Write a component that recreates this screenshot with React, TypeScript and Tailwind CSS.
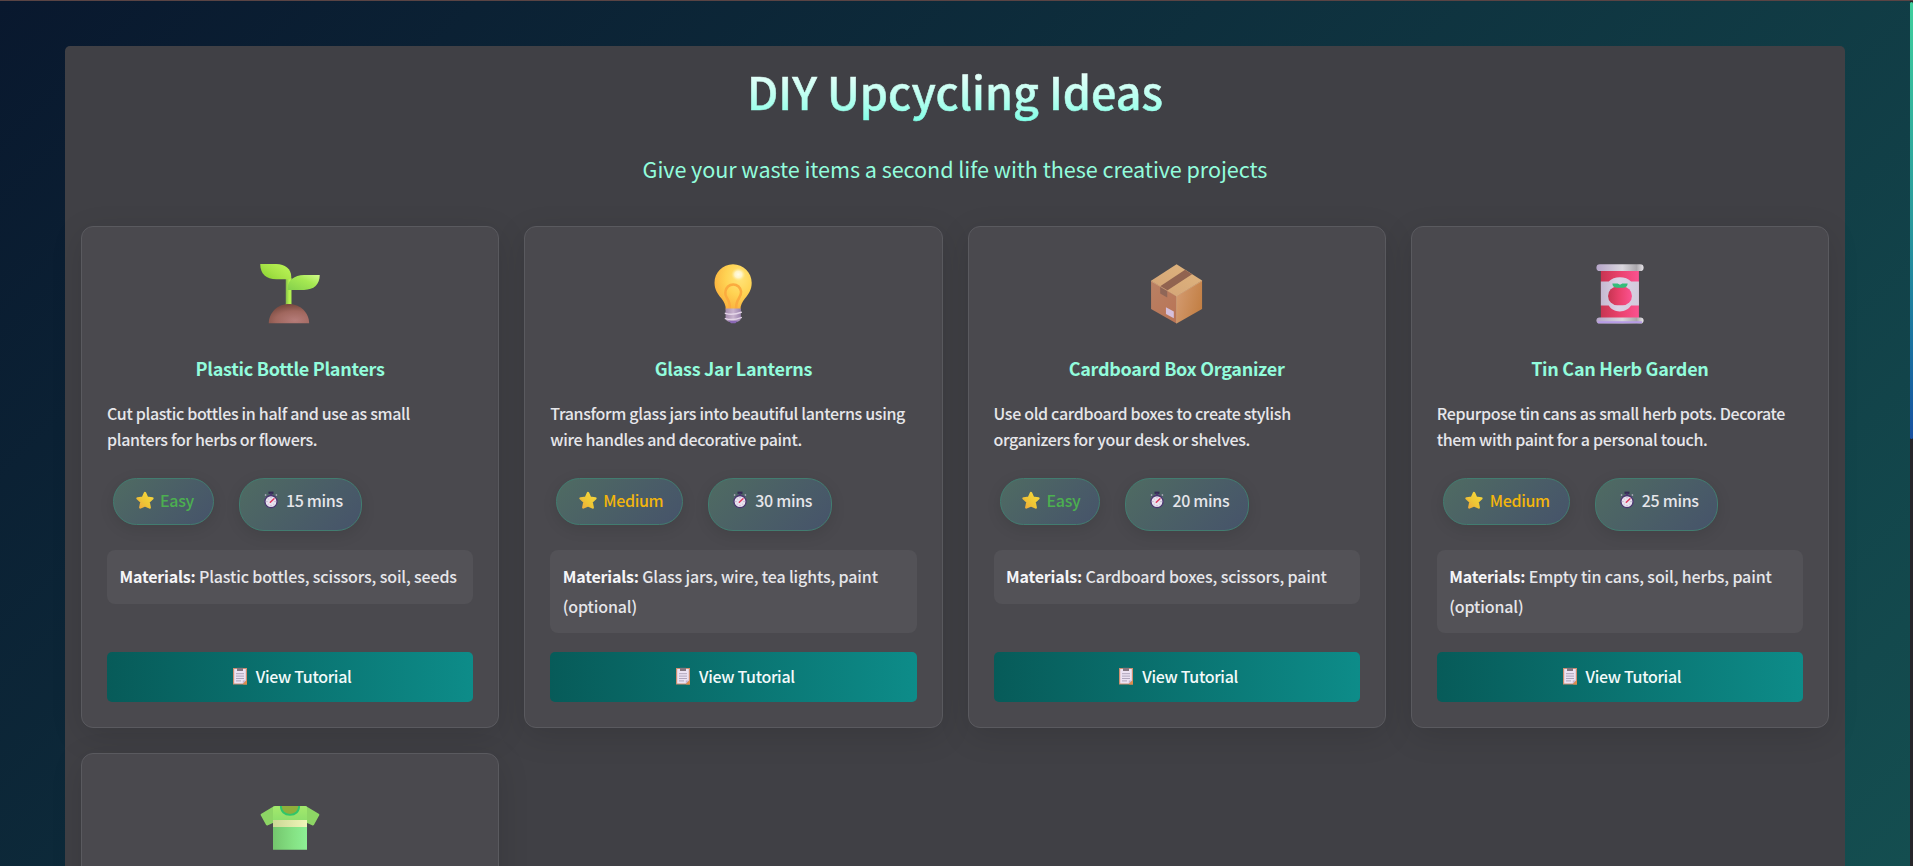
import type { ReactNode } from "react";

function Seedling() {
  return (
    <svg viewBox="0 0 32 32" className="size-[68px]">
      <defs>
        <linearGradient id="leafA" x1="0" y1="1" x2="1" y2="0.3">
          <stop offset="0" stopColor="#86cf2f" />
          <stop offset="0.5" stopColor="#a5e246" />
          <stop offset="1" stopColor="#b9f354" />
        </linearGradient>
        <linearGradient id="leafB" x1="0" y1="1" x2="1" y2="0">
          <stop offset="0" stopColor="#84cf4c" />
          <stop offset="0.6" stopColor="#a6e952" />
          <stop offset="1" stopColor="#d2fb8c" />
        </linearGradient>
        <linearGradient id="stem" x1="0" y1="0" x2="1" y2="0">
          <stop offset="0" stopColor="#83bd4a" />
          <stop offset="0.6" stopColor="#b6f34f" />
          <stop offset="1" stopColor="#b0f053" />
        </linearGradient>
        <radialGradient id="soil" cx="0.65" cy="0.85" r="0.8">
          <stop offset="0" stopColor="#b57c79" />
          <stop offset="0.6" stopColor="#a0675e" />
          <stop offset="1" stopColor="#7c4c42" />
        </radialGradient>
      </defs>
      <path d="M14 8.500h2.700v14H14z" fill="url(#stem)" />
      <path d="M2 1.900h7.600c4 0 7 2.300 7 6V9.100H9.600C4.700 9.100 2 6.500 2 1.900Z" fill="url(#leafA)" />
      <path d="M30 7.100h-7.400c-4.600 0-7.700 2.600-7.700 6.100v.9h7.700C27.300 14.100 30 11.500 30 7.100Z" fill="url(#leafB)" />
      <path d="M6 29.800c0-4.900 4-9.100 9.500-9.100s9.500 4.200 9.500 9.100Z" fill="url(#soil)" />
    </svg>
  );
}

function Bulb() {
  return (
    <svg viewBox="0 0 32 32" className="size-[68px]">
      <defs>
        <radialGradient id="glass" cx="0.68" cy="0.3" r="0.75">
          <stop offset="0" stopColor="#ffe47a" />
          <stop offset="0.5" stopColor="#ffd353" />
          <stop offset="1" stopColor="#fbb13d" />
        </radialGradient>
        <radialGradient id="shine">
          <stop offset="0" stopColor="#fffbe8" />
          <stop offset="0.5" stopColor="#fff6cf" stopOpacity="0.9" />
          <stop offset="1" stopColor="#ffe98f" stopOpacity="0" />
        </radialGradient>
        <linearGradient id="screw" x1="0" y1="0" x2="1" y2="0">
          <stop offset="0" stopColor="#a48cae" />
          <stop offset="0.5" stopColor="#c9b4cf" />
          <stop offset="1" stopColor="#9a82ae" />
        </linearGradient>
      </defs>
      <path d="M16 2c-4.900 0-8.700 3.900-8.700 8.700 0 3.200 1.500 5.300 3.200 7.300 1.400 1.700 2.100 3.300 2.100 5.400h6.900c0-2.100.8-3.700 2.200-5.400 1.700-2 3.100-4.100 3.100-7.300C24.800 5.900 20.900 2 16 2Z" fill="url(#glass)" />
      <path d="M14.500 23.200c.1-2.300-.4-3.900-1.300-5.200-.8-1.200-1-2-.8-3.100.3-1.900 1.800-3.400 3.700-3.400s3.500 1.500 3.700 3.400c.1 1.100-.2 1.900-1 3.100-.9 1.300-1.400 2.900-1.300 5.200" fill="none" stroke="#fbab3f" strokeWidth="1.200" />
      <ellipse cx="18.500" cy="6.800" rx="3.400" ry="3.100" fill="url(#shine)" />
      <path d="M12.500 22.800h7.200v4.500c0 1-.7 1.600-1.700 1.700h-3.800c-1-.1-1.700-.7-1.700-1.700Z" fill="url(#screw)" />
      <path d="M12.400 25.100c2.400.8 4.900.5 7.500-.5M12.400 27.600c2.400.8 4.900.5 7.500-.5" fill="none" stroke="#e4d6e8" strokeWidth="0.700" strokeLinecap="round" />
      <path d="M13.800 28.600h4.600l-1.300 1.200h-2Z" fill="#8a68b5" />
    </svg>
  );
}

function Package() {
  return (
    <svg viewBox="0 0 32 32" className="size-[68px]">
      <defs>
        <linearGradient id="boxL" x1="0" y1="0" x2="0.700" y2="1">
          <stop offset="0" stopColor="#b98164" />
          <stop offset="1" stopColor="#b97557" />
        </linearGradient>
        <linearGradient id="boxR" x1="0" y1="0.300" x2="1" y2="0.700">
          <stop offset="0" stopColor="#d39a6f" />
          <stop offset="1" stopColor="#c27e42" />
        </linearGradient>
        <linearGradient id="boxT" x1="0" y1="1" x2="1" y2="0">
          <stop offset="0" stopColor="#d2a377" />
          <stop offset="1" stopColor="#e0b57d" />
        </linearGradient>
      </defs>
      <path d="M3.800 9.800v13.300l12 6.800V17Z" fill="url(#boxL)" />
      <path d="M27.800 9.700v13.400l-12 6.800V17Z" fill="url(#boxR)" />
      <path d="M15.800 2 3.800 9.800l12 7.200 12-7.300Z" fill="url(#boxT)" />
      <path d="M19.800 4.600 8.100 12.300l3.300 2L23.100 6.700Z" fill="#916350" />
      <path d="M8.100 12.300v3.500l3.300 1.900v-3.400Z" fill="#8f6657" />
      <path d="m10.800 22.200 3.700 2v3.200l-3.700-2Z" fill="#d5c0dc" />
      <path d="m3.800 9.900 12 7.100 12-7.200M15.800 17v12.800" fill="none" stroke="#e6b384" strokeWidth="0.250" />
    </svg>
  );
}

function TomatoCan() {
  return (
    <svg viewBox="0 0 32 32" className="size-[68px]">
      <defs>
        <linearGradient id="can" x1="0" y1="0" x2="1" y2="0">
          <stop offset="0" stopColor="#c73552" />
          <stop offset="0.450" stopColor="#e8406a" />
          <stop offset="1" stopColor="#fb5290" />
        </linearGradient>
        <linearGradient id="label" x1="0" y1="0" x2="1" y2="0">
          <stop offset="0" stopColor="#c4b8d0" />
          <stop offset="0.450" stopColor="#dcd2e6" />
          <stop offset="1" stopColor="#d2cbdc" />
        </linearGradient>
        <linearGradient id="rim" x1="0" y1="0" x2="1" y2="0">
          <stop offset="0" stopColor="#b6a5c9" />
          <stop offset="0.550" stopColor="#d9d6dd" />
          <stop offset="0.850" stopColor="#aaa7ac" />
          <stop offset="1" stopColor="#e6e3e8" />
        </linearGradient>
      </defs>
      <path d="M7 4h17.900v24H7z" fill="url(#can)" />
      <path d="M7 10.100h3.700c1.200-1.300 3.100-2 5.200-2s4.200.7 5.300 2h3.700v11.300h-3.700c-1.100 1.700-3 2.800-5.300 2.800s-4.200-1.100-5.200-2.800H7Z" fill="url(#label)" />
      <rect x="10.400" y="12.500" width="11.200" height="8.800" rx="4.300" fill="url(#can)" />
      <path d="M12.400 11h2.500l1.100.700 1.100-.7h2.500c-.1 1.500-1 2-2.400 2h-2.500c-1.400 0-2.200-.6-2.300-2Z" fill="#36bd7b" />
      <rect x="4.900" y="2" width="22.200" height="3.200" rx="1.600" fill="url(#rim)" />
      <rect x="4.900" y="27" width="22.200" height="2.900" rx="1.450" fill="url(#rim)" />
      <path d="M6 29.300h20" stroke="#b79be6" strokeWidth="0.900" strokeLinecap="round" />
    </svg>
  );
}

function Shirt() {
  return (
    <svg viewBox="0 0 32 32" className="size-[68px]">
      <defs>
        <linearGradient id="shirtTop" x1="0" y1="0" x2="0" y2="1">
          <stop offset="0" stopColor="#a4e96c" />
          <stop offset="1" stopColor="#8fdf6c" />
        </linearGradient>
        <linearGradient id="shirtBody" x1="0" y1="0" x2="1" y2="0">
          <stop offset="0" stopColor="#74c56d" />
          <stop offset="0.600" stopColor="#85e284" />
          <stop offset="1" stopColor="#8df095" />
        </linearGradient>
        <linearGradient id="stripe" x1="0" y1="0" x2="1" y2="0">
          <stop offset="0" stopColor="#ccd795" />
          <stop offset="1" stopColor="#f0f6b9" />
        </linearGradient>
      </defs>
      <path d="M8 9.300 2.500 12.600c-.3.200-.4.500-.2.800l2.400 4.400c.2.300.6.400.9.200L9 16.500ZM24 9.300l5.500 3.300c.3.200.4.500.2.800l-2.400 4.400c-.2.300-.6.400-.9.200L23 16.500Z" fill="#8dd565" />
      <path d="M8 9.300c.4-.3.800-.4 1.200-.4h13.600c.4 0 .8.100 1.200.4v20.200H8Z" fill="url(#shirtBody)" />
      <path d="M8 9.300c.4-.3.800-.4 1.200-.4h13.600c.4 0 .8.100 1.200.4v6.300H8Z" fill="url(#shirtTop)" />
      <path d="M8 15.500h16v3.300H8z" fill="url(#stripe)" />
      <path d="M11.800 8.900c0 2.500 1.700 4.100 4.200 4.100s4.200-1.600 4.200-4.100Z" fill="#8fae3c" />
      <path d="M11.700 8.900c0 2.600 1.800 4.200 4.300 4.200s4.300-1.600 4.300-4.200" fill="none" stroke="#2fc66a" strokeWidth="0.900" />
    </svg>
  );
}

function Star() {
  return (
    <svg viewBox="0 0 18 18" className="mx-[2.500px] size-[18px]">
      <defs>
        <linearGradient id="star" x1="0" y1="1" x2="1" y2="0">
          <stop offset="0" stopColor="#f0a93a" />
          <stop offset="0.450" stopColor="#eec735" />
          <stop offset="1" stopColor="#f8d93c" />
        </linearGradient>
      </defs>
      <path d="M9 2 11.100 6.800l5.300.600-3.800 3.600 1.100 5.500L9 14.400l-4.700 2.100 1.100-5.500L1.600 7.400 6.900 6.800Z" fill="url(#star)" stroke="url(#star)" strokeWidth="2.400" strokeLinejoin="round" />
    </svg>
  );
}

function Stopwatch() {
  return (
    <svg viewBox="0 0 18 18" className="mx-[2px] size-[18px]">
      <path d="M6.500.600h5v2.300h-5Z" fill="#352a55" />
      <path d="M8 2.500h2v2H8Z" fill="#4b3a72" />
      <path d="m3 4.500 1.200-1M15 4.500l-1.200-1" stroke="#b9aec6" strokeWidth="1.500" />
      <circle cx="9" cy="10.600" r="6.100" fill="#e9e2ef" stroke="#4a3570" strokeWidth="1.300" />
      <path d="M9 5.900v1.300M9 14v1.300M4.300 10.600h1.300M12.400 10.600h1.300M5.700 7.300l.9.900M5.700 13.900l.9-.9M12.300 13.900l-.9-.9" stroke="#a79bb8" strokeWidth="0.700" />
      <path d="M8.300 11.300 12 7.700" stroke="#e0395f" strokeWidth="1.500" strokeLinecap="round" />
    </svg>
  );
}

function Clipboard() {
  return (
    <svg viewBox="0 0 18 18" className="mx-[2px] size-[18px]">
      <path d="M2 1h14v16.500H2Z" fill="#cf8f70" />
      <path d="M3.200 2.100h11.600v11.400l-3 3H3.200Z" fill="#ece2f3" />
      <path d="M11.800 16.500v-3h3Z" fill="#c5b2d0" />
      <path d="m16 13-4 4.500h4Z" fill="#dd8c4a" />
      <path d="M6 .800h6v3.200H6Z" fill="#85767f" />
      <path d="M5 6.700h8M5 9.100h8M5 11.500h8M5 13.900h5" stroke="#a99fb5" strokeWidth="0.900" />
    </svg>
  );
}

type Project = {
  icon: ReactNode;
  title: string;
  description: string;
  level: "Easy" | "Medium";
  time: string;
  materials: string;
};

const projects: Project[] = [
  {
    icon: <Seedling />,
    title: "Plastic Bottle Planters",
    description: "Cut plastic bottles in half and use as small planters for herbs or flowers.",
    level: "Easy",
    time: "15 mins",
    materials: "Plastic bottles, scissors, soil, seeds",
  },
  {
    icon: <Bulb />,
    title: "Glass Jar Lanterns",
    description: "Transform glass jars into beautiful lanterns using wire handles and decorative paint.",
    level: "Medium",
    time: "30 mins",
    materials: "Glass jars, wire, tea lights, paint (optional)",
  },
  {
    icon: <Package />,
    title: "Cardboard Box Organizer",
    description: "Use old cardboard boxes to create stylish organizers for your desk or shelves.",
    level: "Easy",
    time: "20 mins",
    materials: "Cardboard boxes, scissors, paint",
  },
  {
    icon: <TomatoCan />,
    title: "Tin Can Herb Garden",
    description: "Repurpose tin cans as small herb pots. Decorate them with paint for a personal touch.",
    level: "Medium",
    time: "25 mins",
    materials: "Empty tin cans, soil, herbs, paint (optional)",
  },
];

function Card({ children }: { children: ReactNode }) {
  return (
    <article className="flex min-h-[502px] flex-col rounded-xl border border-[#5a5a5f] bg-[#4a494e] p-[25px] shadow-[0_8px_32px_rgba(0,0,0,0.12)]">
      {children}
    </article>
  );
}

function CardIcon({ children }: { children: ReactNode }) {
  return <div className="flex h-[102px] justify-center pt-2">{children}</div>;
}

function ProjectCard({ icon, title, description, level, time, materials }: Project) {
  return (
    <Card>
      <CardIcon>{icon}</CardIcon>
      <h2 className="text-center text-[18px] leading-[29px] font-bold tracking-[-0.28px] text-[#92fcdc]">{title}</h2>
      <p className="mt-[17px] text-base leading-[26px] font-medium tracking-[-0.33px]">{description}</p>
      <div className="mt-[26px] flex items-start gap-[25px] pl-1.5 font-medium tracking-[-0.33px]">
        <span className="flex h-[47px] items-center gap-1 rounded-[25px] border border-[#427c70] bg-linear-135 from-[#4f6b62] to-[#46536a] px-[19px] pb-[3px] shadow-[0_4px_15px_rgba(0,0,0,0.1)]">
          <Star />
          <span className={level === "Easy" ? "text-[#4caf50]" : "text-[#f3b50c]"}>{level}</span>
        </span>
        <span className="flex h-[53px] items-center gap-1 rounded-[25px] border border-[#427c70] bg-linear-135 from-[#4f6b62] to-[#46536a] pr-[18.500px] pb-[9px] pl-[20px] shadow-[0_4px_15px_rgba(0,0,0,0.1)]">
          <Stopwatch />
          <span>{time}</span>
        </span>
      </div>
      <p className="mt-[19px] mb-[19px] min-h-[54px] rounded-lg bg-[#535257] px-[12.500px] pt-[11px] pb-3 text-base leading-[30px] font-medium tracking-[-0.14px]">
        <strong className="font-bold tracking-[-0.2px] text-[#f5f5f7]">Materials:</strong> {materials}
      </p>
      <button className="mt-auto flex h-[50px] w-full items-center justify-center gap-[5px] rounded-[5px] bg-linear-to-r from-[#075b59] to-[#0d8c89] pb-0.5 text-base font-medium tracking-[-0.33px] text-[#f3fafa]">
        <Clipboard />
        <span>View Tutorial</span>
      </button>
    </Card>
  );
}

export default function App() {
  return (
    <div className="flex h-[866px] w-full overflow-hidden border-t border-[#5a4444] bg-[#26262a] font-['Noto_Sans_CJK_SC',sans-serif] text-[#e6e6ea]">
      <div className="h-[866px] w-[1910px] shrink-0 bg-linear-135 from-[#09182e] to-[#144e50] px-[65px] pt-[45px]">
        <main className="min-h-[900px] rounded-[5px] bg-[#404045] px-4 pt-[13px]">
          <h1 className="bg-linear-to-b from-white to-[#7bffe6] bg-clip-text text-center text-[44.8px] leading-[64px] font-medium text-transparent [-webkit-text-stroke:0.6px_transparent]">
            DIY Upcycling Ideas
          </h1>
          <p className="mt-[30px] text-center text-[21.6px] leading-[32px] tracking-[-0.06px] text-[#92fcdc]">
            Give your waste items a second life with these creative projects
          </p>
          <div className="mt-[41px] grid grid-cols-4 gap-[25px]">
            {projects.map((project) => (
              <ProjectCard key={project.title} {...project} />
            ))}
            <Card>
              <CardIcon>
                <Shirt />
              </CardIcon>
            </Card>
          </div>
        </main>
      </div>
      <div className="w-[3px] shrink-0 pt-px">
        <div className="h-[437px] rounded-[2px] bg-linear-to-b from-[#3fcf9c] via-[#2a9a9c] to-[#1850a0]" />
      </div>
    </div>
  );
}
